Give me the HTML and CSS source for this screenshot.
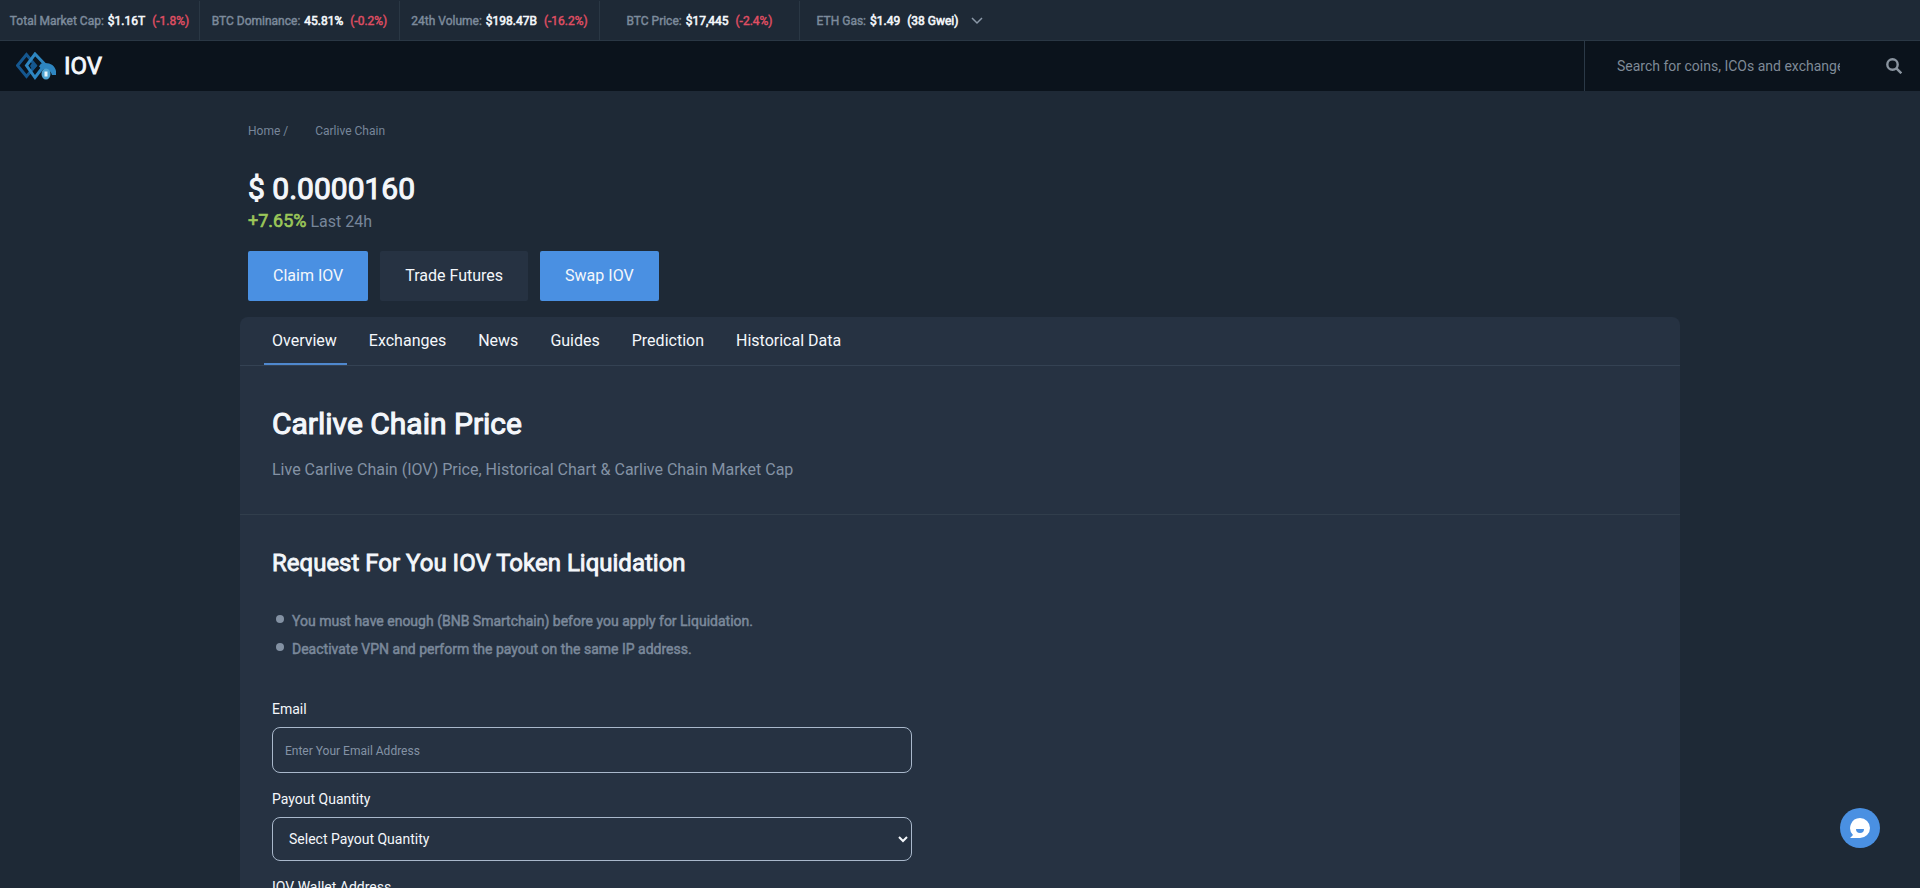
FILE: index.html
```html
<!DOCTYPE html>
<html lang="en">
<head>
<meta charset="utf-8">
<meta name="viewport" content="width=device-width, initial-scale=1">
<title>Carlive Chain Price</title>
<link rel="stylesheet" href="styles.css">
</head>
<body>
<div class="ticker">
  <div class="ticker-item"><span>Total Market Cap:</span><strong>$1.16T</strong><em>(-1.8%)</em></div>
  <div class="ticker-item"><span>BTC Dominance:</span><strong>45.81%</strong><em>(-0.2%)</em></div>
  <div class="ticker-item"><span>24th Volume:</span><strong>$198.47B</strong><em>(-16.2%)</em></div>
  <div class="ticker-item"><span>BTC Price:</span><strong>$17,445</strong><em>(-2.4%)</em></div>
  <div class="ticker-item"><span>ETH Gas:</span><strong>$1.49</strong><strong class="gwei">(38 Gwei)</strong>
    <svg class="chevron" viewBox="0 0 12 8" aria-hidden="true"><path d="M1 1l5 5 5-5"/></svg>
  </div>
</div>
<header class="nav">
  <a class="brand" href="#">
    <svg class="logo" viewBox="0 0 40 28" aria-hidden="true">
      <path d="M10.500 2.500L1.500 13.500l9 11 9-11z" fill="none" stroke="#15578f" stroke-width="3"/>
      <path d="M17 9.500l4 4.500-4 4.500-3-4.500z" fill="#15578f"/>
      <path d="M29 12.500L19 2l-8.500 11.500L19 25.500l8-10.500" fill="none" stroke="#2e86c1" stroke-width="3"/>
      <path d="M25 11.500c7-2 14 1 15 7.500v4h-4c-1-4.500-5-6-10-5.500l-3-3z" fill="#2e86c1"/>
      <ellipse cx="30" cy="22" rx="4.500" ry="5.500" fill="#4fa3d1"/>
      <path d="M28.500 19.500h3v5h-3z" fill="#e4f4fb"/>
    </svg>
    <span>IOV</span>
  </a>
  <form class="search">
    <input type="text" aria-label="Search" placeholder="Search for coins, ICOs and exchanges">
    <button type="button" aria-label="Submit search">
      <svg viewBox="0 0 16 16" aria-hidden="true"><circle cx="6.500" cy="6.500" r="5.200"/><path d="M10.200 10.200L15.300 15.300"/></svg>
    </button>
  </form>
</header>
<main class="page">
  <section class="summary">
    <nav class="crumbs"><a href="#">Home /</a><span>Carlive Chain</span></nav>
    <div class="price">$ 0.0000160</div>
    <div class="change"><b>+7.65%</b> Last 24h</div>
    <div class="actions">
      <button type="button" class="btn">Claim IOV</button>
      <button type="button" class="btn btn-dark">Trade Futures</button>
      <button type="button" class="btn">Swap IOV</button>
    </div>
  </section>
  <div class="card">
    <nav class="tabs">
      <a class="active" href="#">Overview</a>
      <a href="#">Exchanges</a>
      <a href="#">News</a>
      <a href="#">Guides</a>
      <a href="#">Prediction</a>
      <a href="#">Historical Data</a>
    </nav>
    <section class="intro">
      <h1>Carlive Chain Price</h1>
      <p>Live Carlive Chain (IOV) Price, Historical Chart &amp; Carlive Chain Market Cap</p>
    </section>
    <section class="request">
      <h2>Request For You IOV Token Liquidation</h2>
      <ul class="notes">
        <li>You must have enough (BNB Smartchain) before you apply for Liquidation.</li>
        <li>Deactivate VPN and perform the payout on the same IP address.</li>
      </ul>
      <form class="fields">
        <label for="email">Email</label>
        <input id="email" type="email" placeholder="Enter Your Email Address">
        <label for="quantity">Payout Quantity</label>
        <select id="quantity"><option>Select Payout Quantity</option></select>
        <label for="wallet">IOV Wallet Address</label>
        <input id="wallet" type="text">
      </form>
    </section>
  </div>
</main>
<button type="button" class="chat" aria-label="Open chat">
  <svg viewBox="0 0 20 20" aria-hidden="true"><path d="M10 0a10 10 0 1 1 0 20H0l3-3A10 10 0 0 1 10 0z" fill="#fff"/><path d="M6 11h8a4 4 0 0 1-8 0z" fill="#4a90e2"/></svg>
</button>
</body>
</html>
```

FILE: styles.css
```css
* { box-sizing: border-box; }

body {
  margin: 0;
  background: #1e2936;
  color: #f4f7fb;
  font-family: Roboto, "Liberation Sans", sans-serif;
  font-size: 16px;
  line-height: 24px;
}

a { color: inherit; text-decoration: none; }
button, input, select { font-family: inherit; }
h1, h2, p, ul { margin: 0; }

/* Semi-bold look on the regular face */
.ticker-item strong, .brand, .price, .change b, h1, h2, .notes, .ticker-item span, .ticker-item em {
  font-weight: 400;
  -webkit-text-stroke: 0.035em currentColor;
}
.ticker-item strong { -webkit-text-stroke-width: 0.05em; }

.ticker {
  display: flex;
  height: 41px;
  padding-top: 1px;
  border-bottom: 1px solid #2a3744;
  font-size: 12px;
  white-space: nowrap;
}
.ticker-item {
  display: flex;
  flex: 0 0 200px;
  align-items: center;
  justify-content: center;
  border-right: 1px solid #2a3744;
}
.ticker-item:last-child { border-right: 0; }
.ticker-item span { color: #7d8b9c; }
.ticker-item strong { margin-left: 4px; }
.ticker-item em { margin-left: 7px; color: #e04f64; font-style: normal; }
.ticker-item .gwei { margin-left: 7px; }
.chevron {
  width: 12px;
  height: 8px;
  margin-left: 13px;
  fill: none;
  stroke: #8b98a8;
  stroke-width: 1.500;
}

.nav {
  display: flex;
  justify-content: space-between;
  height: 50px;
  background: #0b131c;
}
.brand {
  display: flex;
  align-items: center;
  gap: 8px;
  padding-left: 16px;
  font-size: 24px;
}
.logo { width: 40px; height: 28px; }
.search {
  display: flex;
  width: 336px;
  padding: 0 18px 0 32px;
  align-items: center;
  justify-content: space-between;
  border-left: 1px solid #2b3947;
}
.search input {
  width: 223px;
  padding: 0;
  border: 0;
  outline: 0;
  background: none;
  color: #8592a3;
  font-size: 14px;
}
.search input::placeholder { color: #7f8a97; opacity: 1; }
.search button { display: flex; padding: 0; border: 0; background: none; }
.search svg { width: 16px; height: 16px; fill: none; stroke: #8a949f; stroke-width: 2.400; }

.page { max-width: 1440px; margin: 0 auto; }
.summary { padding: 28px 8px 16px; }
.crumbs { display: flex; gap: 27px; color: #77869a; font-size: 12px; }
.price { margin-top: 28px; font-size: 30px; line-height: 36px; }
.change { margin-top: 2px; color: #77869a; }
.change b { color: #9bc759; font-size: 18px; }
.actions { display: flex; gap: 12px; margin-top: 17px; }
.btn {
  height: 50px;
  padding: 0 25px 2px;
  border: 0;
  border-radius: 2px;
  background: #4a90e2;
  color: #f4f7fb;
  font-size: 16px;
}
.btn-dark { background: #263242; }

.card { border-radius: 8px 8px 0 0; background: #263242; }
.tabs {
  display: flex;
  gap: 14px;
  height: 49px;
  padding: 0 24px;
  border-bottom: 1px solid #344253;
}
.tabs a { padding: 12px 10px 10px 8px; border-bottom: 2px solid transparent; }
.tabs .active { border-color: #4f88ce; }
.intro { padding: 40px 32px 32px; border-bottom: 1px solid #313e4c; }
.intro h1 { font-size: 30px; line-height: 36px; }
.intro p { margin-top: 16px; color: #8492a5; }

.request { padding: 32px; }
.request h2 { font-size: 24px; line-height: 32px; }
.notes {
  margin-top: 28px;
  padding: 0;
  color: #7b899b;
  font-size: 14px;
  line-height: 28px;
  list-style: none;
}
.notes li { display: flex; gap: 8px; padding-left: 4px; }
.notes li::before {
  content: "";
  width: 8px;
  height: 8px;
  margin-top: 8px;
  border-radius: 50%;
  background: #8391a3;
}
.fields { display: flex; flex-direction: column; max-width: 640px; margin-top: 34px; font-size: 14px; }
.fields label { margin-bottom: 6px; }
.fields input, .fields select {
  height: 46px;
  margin-bottom: 14px;
  padding: 2px 12px 0;
  border: 1px solid #a9b8cb;
  border-radius: 8px;
  background: #263242;
  color: #f4f7fb;
  font-size: 12px;
}
.fields select { height: 44px; padding-top: 0; font-size: 14px; }
.fields input::placeholder { color: #8492a5; opacity: 1; }

.chat {
  position: fixed;
  right: 40px;
  bottom: 40px;
  display: flex;
  width: 40px;
  height: 40px;
  align-items: center;
  justify-content: center;
  padding: 0;
  border: 0;
  border-radius: 50%;
  background: #4a90e2;
}
.chat svg { width: 20px; height: 20px; }
```
